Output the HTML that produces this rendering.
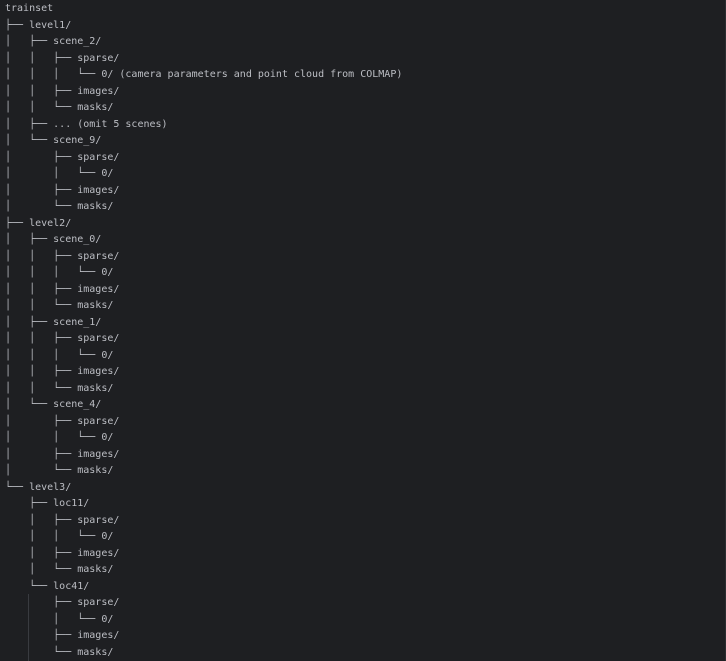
<!DOCTYPE html>
<html><head><meta charset="utf-8"><style>
html,body{margin:0;padding:0;background:#1e1f22;width:726px;height:661px;overflow:hidden}
pre{margin:0;padding:1px 0 0 5px;font-family:"DejaVu Sans Mono","Liberation Mono",monospace;font-size:10px;line-height:16.5px;color:#bcbec4;position:relative;top:0}
.g{position:absolute;left:28px;top:594px;width:1px;height:67px;background:#393b40}
.r{position:absolute;right:0;top:0;width:1px;height:661px;background:#2b2d30}
</style></head><body>
<div class="g"></div><div class="r"></div>
<pre>trainset
├── level1/
│   ├── scene_2/
│   │   ├── sparse/
│   │   │   └── 0/ (camera parameters and point cloud from COLMAP)
│   │   ├── images/
│   │   └── masks/
│   ├── ... (omit 5 scenes)
│   └── scene_9/
│       ├── sparse/
│       │   └── 0/
│       ├── images/
│       └── masks/
├── level2/
│   ├── scene_0/
│   │   ├── sparse/
│   │   │   └── 0/
│   │   ├── images/
│   │   └── masks/
│   ├── scene_1/
│   │   ├── sparse/
│   │   │   └── 0/
│   │   ├── images/
│   │   └── masks/
│   └── scene_4/
│       ├── sparse/
│       │   └── 0/
│       ├── images/
│       └── masks/
└── level3/
    ├── loc11/
    │   ├── sparse/
    │   │   └── 0/
    │   ├── images/
    │   └── masks/
    └── loc41/
        ├── sparse/
        │   └── 0/
        ├── images/
        └── masks/</pre>
</body></html>
